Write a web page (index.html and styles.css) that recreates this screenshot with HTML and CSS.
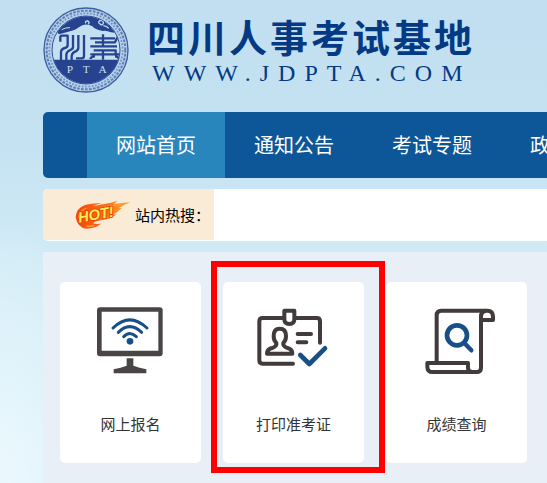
FILE: index.html
```html
<!DOCTYPE html>
<html lang="zh-CN">
<head>
    <meta charset="UTF-8">
    <meta name="viewport" content="width=device-width, initial-scale=1.0">
    <title>四川人事考试基地</title>
    <link rel="stylesheet" href="styles.css">
</head>
<body>
    <div class="container">
        <header class="header">
            <svg class="seal" viewBox="22 22 258 258" aria-hidden="true">
                <defs>
                    <clipPath id="sealInner"><circle cx="151" cy="151" r="101"/></clipPath>
                </defs>
                <circle cx="151" cy="151" r="126" fill="#b4cfe9" stroke="#3d5f9f" stroke-width="4"/>
                <circle cx="151" cy="151" r="118" fill="none" stroke="#5e7fb6" stroke-width="6" stroke-dasharray="8 4"/>
                <circle cx="151" cy="151" r="110" fill="none" stroke="#6f8fc1" stroke-width="5" stroke-dasharray="5 5"/>
                <circle cx="151" cy="151" r="102" fill="#c3dff1" stroke="#32519a" stroke-width="3"/>
                <g clip-path="url(#sealInner)">
                    <path d="M60 94 Q85 50 151 49 Q220 50 242 100 L226 98 Q212 92 202 94 Q180 91 170 80 Q155 71 140 77 Q128 84 118 90 Q95 97 70 104Z" fill="#27438f"/>
                    <path d="M48 180 H254 V260 H48Z" fill="#27438f"/>
                    <path d="M78 90 Q90 83 103 84" fill="none" stroke="#c3dff1" stroke-width="3"/>
                    <path d="M150 71 Q148 63 156 64 Q163 66 158 74 M190 72 Q187 62 197 62 Q207 66 201 74 Q195 78 192 71 M203 78 Q214 79 219 86" fill="none" stroke="#c3dff1" stroke-width="4"/>
                    <!-- seal script marks -->
                    <g fill="none" stroke="#27438f" stroke-width="7" stroke-linejoin="round">
                        <path d="M74 126 V112 Q74 108 79 108 H96 V136 Q96 143 88 145 Q76 148 76 158 V182"/>
                        <path d="M112 106 V142 Q112 148 104 151 Q92 156 92 165 V182"/>
                        <path d="M128 106 V145 Q128 151 120 155 Q108 160 108 170 V182"/>
                        <path d="M145 106 V168 Q145 176 137 176 H121"/>
                        <path d="M164 116 H238 M202 104 V140 M178 128 H238 L248 108 M164 140 H244 M174 152 H240 V164 M164 164 H250 M164 178 Q166 170 178 170 M250 178 Q248 170 238 170 M202 152 V180"/>
                    </g>
                </g>
                <g class="seal-text">
                    <text x="103" y="220">P</text>
                    <text x="152" y="220">T</text>
                    <text x="201" y="220">A</text>
                </g>
            </svg>
            <div class="brand">
                <h1 class="brand-name">四川人事考试基地</h1>
                <div class="brand-url">WWW.JDPTA.COM</div>
            </div>
        </header>

        <nav class="nav">
            <a class="nav-item active" href="#">网站首页</a>
            <a class="nav-item" href="#">通知公告</a>
            <a class="nav-item" href="#">考试专题</a>
            <a class="nav-item" href="#">政</a>
        </nav>

        <div class="hot-bar">
            <div class="hot-label">
                <svg class="hot-icon" viewBox="0 0 168 90" aria-hidden="true">
                    <defs>
                        <linearGradient id="flame" x1="0" y1="0" x2="1" y2="0">
                            <stop offset="0" stop-color="#f8430c"/>
                            <stop offset="0.6" stop-color="#fb7419"/>
                            <stop offset="1" stop-color="#fdb13c"/>
                        </linearGradient>
                    </defs>
                    <path d="M2 52 Q4 24 30 15 Q55 8 80 10 Q60 15 52 18 Q86 12 108 8 L128 2 Q122 8 116 12 Q140 9 166 6 Q144 16 132 24 L140 24 Q128 36 116 43 Q122 44 126 42 Q108 58 82 60 Q62 62 54 70 Q70 74 80 70 Q62 86 34 86 Q8 84 2 52Z" fill="url(#flame)"/>
                    <path d="M10 54 Q12 34 34 24 M34 78 Q48 80 58 76 M96 22 Q116 16 136 14" fill="none" stroke="#ffa33a" stroke-width="4"/>
                    <text class="hot-text" x="12" y="68" transform="rotate(-10 12 68)">HOT!</text>
                </svg>
                <span>站内热搜：</span>
            </div>
        </div>

        <main class="panel">
            <a class="card" href="#">
                <svg class="card-icon" viewBox="0 0 240 240" aria-hidden="true">
                    <path fill="#4a4545" fill-rule="evenodd" d="M27 22 H206 Q215 22 215 31 V160 Q215 169 206 169 H27 Q18 169 18 160 V31 Q18 22 27 22Z M32 35 V152 H202 V35Z"/>
                    <path fill="#4a4545" d="M107 175 H127 V197 Q145 203 166 208 V220 H68 V208 Q90 203 107 197Z"/>
                    <g fill="none" stroke="#174f86" stroke-width="9" stroke-linecap="round">
                        <path d="M66 84 Q116 35 168 84"/>
                        <path d="M82 97 Q116 63 152 97"/>
                        <path d="M98 110 Q116 91 136 110"/>
                    </g>
                    <circle cx="117" cy="124" r="10" fill="#174f86"/>
                </svg>
                <span class="card-title">网上报名</span>
            </a>

            <a class="card marked" href="#">
                <svg class="card-icon" viewBox="0 0 240 240" aria-hidden="true">
                    <g fill="none" stroke="#413b3b" stroke-width="12" stroke-linecap="round" stroke-linejoin="round">
                        <path d="M88 54 H26 Q16 54 16 64 V181 Q16 191 26 191 H117"/>
                        <path d="M124 54 H188 Q198 54 198 64 V128"/>
                        <path d="M91 32 H121 V58 Q121 72 106 72 Q91 72 91 58Z"/>
                        <path d="M131 102 H171 M131 127 H157"/>
                        <path d="M77 86 Q96 86 96 108 Q96 122 88 129 Q86 139 101 144 Q115 148 115 161 H39 Q39 148 54 144 Q69 139 67 129 Q59 122 59 108 Q59 86 77 86Z"/>
                    </g>
                    <path d="M139 165 L166 192 L213 145" fill="none" stroke="#174f86" stroke-width="14" stroke-linecap="round" stroke-linejoin="round"/>
                </svg>
                <span class="card-title">打印准考证</span>
            </a>

            <a class="card" href="#">
                <svg class="card-icon" viewBox="0 0 240 240" aria-hidden="true">
                    <g fill="none" stroke="#413b3b" stroke-width="12" stroke-linejoin="round">
                        <path d="M59 187 V46 Q59 32 73 32 H211 Q228 32 228 50 V60 H193"/>
                        <path d="M207 32 Q192 34 192 50 V203 Q192 216 178 216 H47 Q31 216 31 200 V189 H153 V204 Q153 216 166 216"/>
                    </g>
                    <circle cx="120" cy="106" r="30" fill="none" stroke="#174f86" stroke-width="14"/>
                    <path d="M142 129 L163 151" stroke="#174f86" stroke-width="13" stroke-linecap="round"/>
                </svg>
                <span class="card-title">成绩查询</span>
            </a>
        </main>
    </div>
</body>
</html>
```

FILE: styles.css
```css
* {
    box-sizing: border-box;
}

body {
    margin: 0;
    min-height: 100vh;
    font-family: 'Noto Sans CJK SC', sans-serif;
    background:
        radial-gradient(ellipse 120px 260px at 0 100%, #ecf8fe 0%, rgba(236, 248, 254, 0) 100%),
        linear-gradient(180deg, #c2dff1 0%, #c5e2f2 30%, #d2ecf6 55%, #d8f0f8 100%);
}

a {
    color: inherit;
    text-decoration: none;
}

.container {
    display: flex;
    flex-direction: column;
    min-height: 100vh;
    padding-left: 43px;
    overflow: hidden;
}

/* header */
.header {
    display: flex;
    align-items: flex-start;
    gap: 18px;
    height: 112px;
    padding-top: 7px;
}

.seal {
    flex: none;
    width: 86px;
    height: 86px;
}

.seal-text {
    fill: #c3dff1;
    font-family: 'Liberation Serif', serif;
    font-size: 34px;
    text-anchor: middle;
}

.brand {
    color: #043a84;
    white-space: nowrap;
}

.brand-name {
    margin: 6px 0 2px;
    font-size: 38px;
    font-weight: 700;
    line-height: 46px;
    letter-spacing: 3px;
}

.brand-url {
    padding-left: 5px;
    font-family: 'Liberation Serif', serif;
    font-size: 24px;
    line-height: 24px;
    letter-spacing: 9px;
}

/* navigation */
.nav {
    display: flex;
    height: 66px;
    padding-left: 44px;
    background: #0d5798;
    border-radius: 5px 0 0 5px;
    overflow: hidden;
}

.nav-item {
    flex: none;
    padding: 0 29px;
    color: #fff;
    font-size: 20px;
    line-height: 66px;
}

.nav-item.active {
    background: #2886bd;
}

/* hot search */
.hot-bar {
    display: flex;
    height: 52px;
    margin-top: 11px;
    padding-bottom: 1px;
    background: #fff;
    border-radius: 5px 0 0 5px;
    overflow: hidden;
}

.hot-label {
    display: flex;
    align-items: center;
    gap: 4px;
    width: 171px;
    padding-left: 32px;
    background: #faebd7;
    color: #000;
    font-size: 15px;
    white-space: nowrap;
}

.hot-icon {
    flex: none;
    width: 56px;
    height: 30px;
}

.hot-text {
    fill: #fff04e;
    stroke: #e8430c;
    stroke-width: 5px;
    paint-order: stroke;
    font-family: 'Liberation Sans', sans-serif;
    font-size: 44px;
    font-weight: 700;
    font-style: italic;
}

/* entry cards */
.panel {
    display: flex;
    flex: 1;
    align-items: flex-start;
    gap: 22px;
    margin-top: 11px;
    padding: 30px 17px 20px;
    background: #e8eff7;
}

.card {
    position: relative;
    display: flex;
    flex: none;
    flex-direction: column;
    align-items: center;
    gap: 32px;
    width: 141px;
    padding: 18px 0 27px;
    background: #fff;
    border-radius: 5px;
    color: #333;
}

.card-icon {
    width: 80px;
    height: 80px;
}

.card-title {
    font-size: 15px;
    line-height: 24px;
}

.marked::after {
    content: '';
    position: absolute;
    top: -21px;
    right: -21px;
    bottom: -10px;
    left: -12px;
    border: 6px solid #fe0000;
}
```
